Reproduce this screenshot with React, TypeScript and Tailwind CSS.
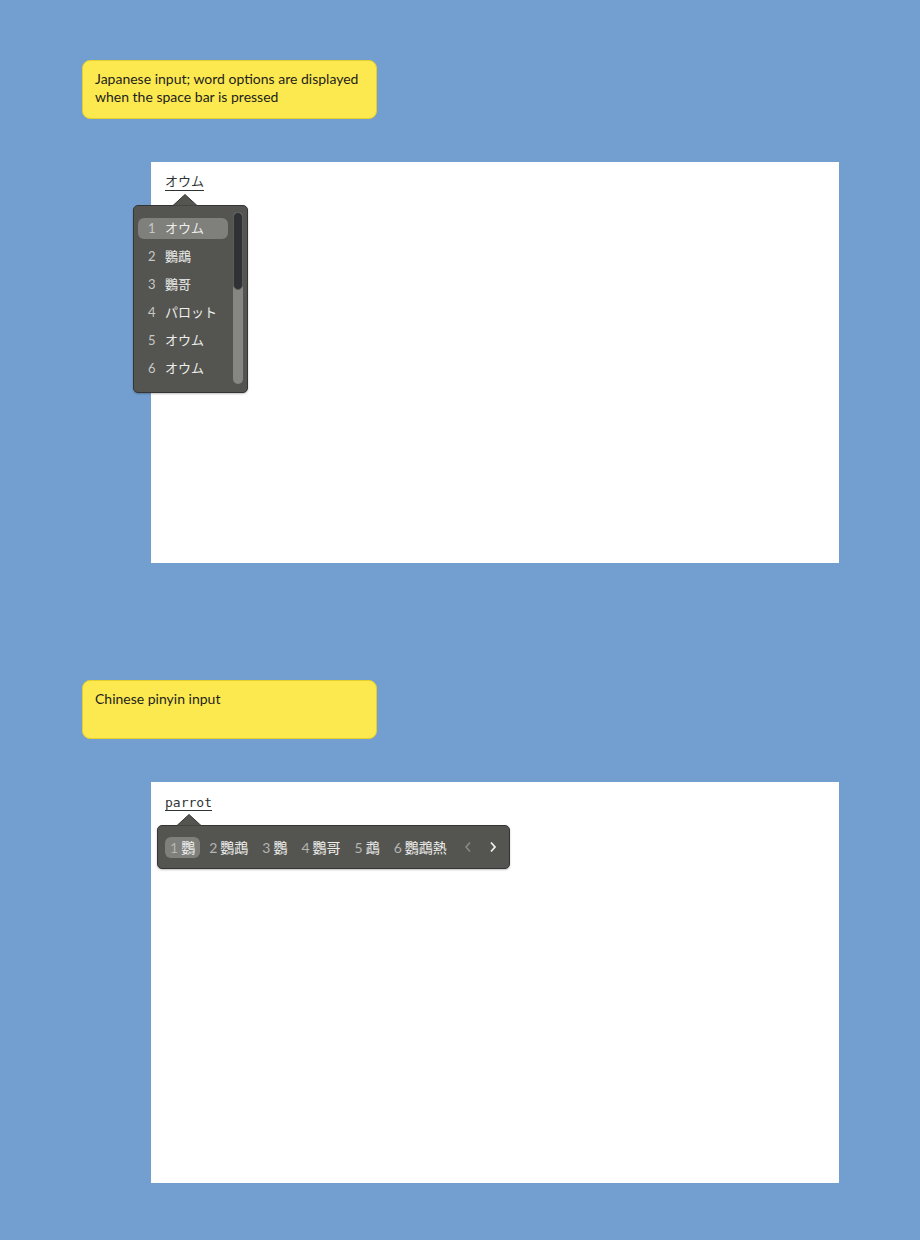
import React from "react";

const ui = { fontFamily: "Lato, 'Noto Sans', sans-serif" };
const jp = { fontFamily: "Lato, 'Noto Sans CJK JP', sans-serif" };
const zh = { fontFamily: "Lato, 'Noto Sans CJK SC', sans-serif" };

function Note({ children }: { children: React.ReactNode }) {
  return (
    <div
      className="ml-[82px] w-[295px] h-[59px] rounded-[8px] bg-[#fce94f] border border-[#e5cf2c] px-[12px] pt-[9px] text-[14px] leading-[18px] text-[#1e1e1e]"
      style={ui}
    >
      {children}
    </div>
  );
}

function Arrow({ left, top }: { left: number; top: number }) {
  return (
    <svg
      className="absolute"
      style={{ left, top }}
      width="24"
      height="12"
      viewBox="0 0 24 12"
    >
      <path d="M0 11.5 L12 0.5 L24 11.5" fill="#545550" stroke="#353633" strokeWidth="1" />
    </svg>
  );
}

const jpWords = ["オウム", "鸚鵡", "鸚哥", "パロット", "オウム", "オウム"];
const zhWords = ["鸚", "鸚鵡", "鸚", "鸚哥", "鵡", "鸚鵡熱"];

export default function App() {
  return (
    <div className="w-[920px] h-[1240px] bg-[#729fcf] pt-[60px] overflow-hidden">
      <Note>
        Japanese input; word options are displayed
        <br />
        when the space bar is pressed
      </Note>

      <div className="relative ml-[151px] mt-[43px] w-[688px] h-[401px] bg-white">
        <span
          className="absolute left-[14px] top-[11px] text-[13px] leading-[17px] text-[#2e3436] border-b border-[#2e3436]"
          style={jp}
        >
          オウム
        </span>

        <div className="absolute left-[-18px] top-[43px] w-[115px] h-[188px]">
          <Arrow left={40} top={-11} />
          <div className="w-full h-full rounded-[5px] bg-[#545550] border border-[#353633] flex pl-[4px] pt-[12px] shadow-[0_1px_2px_rgba(0,0,0,0.25)]">
            <div className="flex flex-col gap-[7px] w-[90px]">
              {jpWords.map((w, i) => (
                <div
                  key={i}
                  className={
                    "flex items-center h-[21px] rounded-[6px] pl-[10px] text-[13px] " +
                    (i === 0 ? "bg-[#7f7f7b]" : "")
                  }
                  style={jp}
                >
                  <span className="w-[17px] text-[#c8c8c4]">{i + 1}</span>
                  <span className="text-[#eeeeec]">{w}</span>
                </div>
              ))}
            </div>
            <div className="ml-[5px] mt-[-6px] w-[10px] h-[172px] rounded-full bg-[#868682]">
              <div className="w-[10px] h-[78px] rounded-full bg-[#2e3234] border border-[#5a5d5c]" />
            </div>
          </div>
        </div>
      </div>

      <div className="mt-[117px]">
        <Note>Chinese pinyin input</Note>
      </div>

      <div className="relative ml-[151px] mt-[43px] w-[688px] h-[401px] bg-white">
        <span
          className="absolute left-[14px] top-[13px] text-[13px] leading-[15px] text-[#2e3436] border-b border-[#2e3436]"
          style={{ fontFamily: "'DejaVu Sans Mono', monospace" }}
        >
          parrot
        </span>

        <div className="absolute left-[6px] top-[43px] w-[353px] h-[44px]">
          <Arrow left={20} top={-11} />
          <div className="w-full h-full rounded-[5px] bg-[#545550] border border-[#353633] flex items-center pl-[7px] shadow-[0_1px_2px_rgba(0,0,0,0.25)]">
            <div className="flex items-center gap-[4px]">
              {zhWords.map((w, i) => (
                <div
                  key={i}
                  className={
                    "flex items-center h-[21px] rounded-[6px] px-[5px] text-[14px] gap-[3px] " +
                    (i === 0 ? "bg-[#7f7f7b]" : "")
                  }
                  style={zh}
                >
                  <span className="text-[#b4b4b0]">{i + 1}</span>
                  <span className="text-[#eeeeec]">{w}</span>
                </div>
              ))}
            </div>
            <svg className="ml-[12px]" width="8" height="12" viewBox="0 0 8 12">
              <path d="M6 1.5 L2 6 L6 10.5" fill="none" stroke="#8a8a86" strokeWidth="1.6" />
            </svg>
            <svg className="ml-[17px]" width="8" height="12" viewBox="0 0 8 12">
              <path d="M2 1.5 L6 6 L2 10.5" fill="none" stroke="#eeeeec" strokeWidth="1.8" />
            </svg>
          </div>
        </div>
      </div>
    </div>
  );
}
